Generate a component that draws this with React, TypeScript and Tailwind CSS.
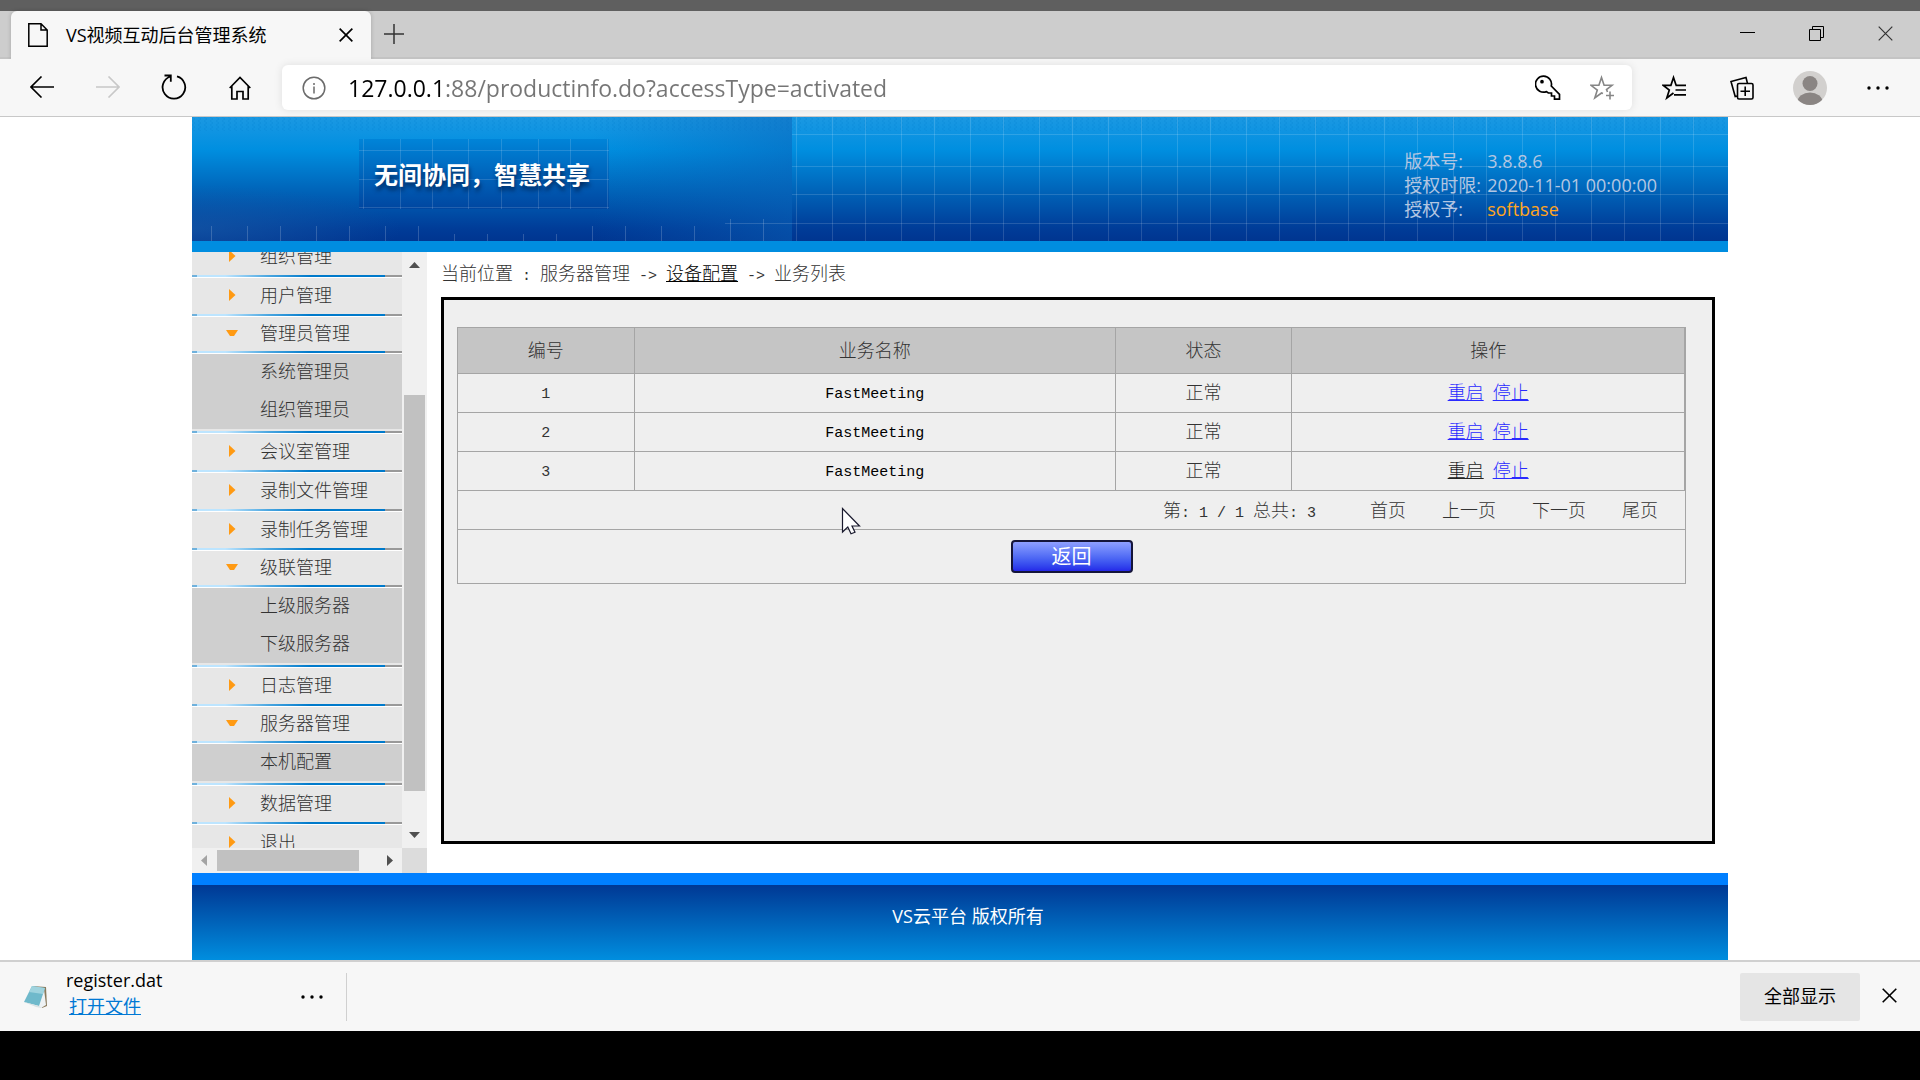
import React from "react";

type Item = { label: string; children?: string[] };

const menu: Item[] = [
  { label: "组织管理" },
  { label: "用户管理" },
  { label: "管理员管理", children: ["系统管理员", "组织管理员"] },
  { label: "会议室管理" },
  { label: "录制文件管理" },
  { label: "录制任务管理" },
  { label: "级联管理", children: ["上级服务器", "下级服务器"] },
  { label: "日志管理" },
  { label: "服务器管理", children: ["本机配置"] },
  { label: "数据管理" },
  { label: "退出" },
];

const rows = [
  { id: 1, name: "FastMeeting", status: "正常", visited: false },
  { id: 2, name: "FastMeeting", status: "正常", visited: false },
  { id: 3, name: "FastMeeting", status: "正常", visited: true },
];

function Mono({ children }: { children: React.ReactNode }) {
  return (
    <span className="whitespace-pre font-['Liberation_Mono',monospace] text-[15px]">{children}</span>
  );
}

function Cross({ size, stroke }: { size: number; stroke: number }) {
  return (
    <svg width={size} height={size} viewBox="0 0 15 15" fill="none" stroke="currentColor" strokeWidth={stroke} aria-hidden="true">
      <path d="M.7 .7 14.3 14.3M14.3 .7 .7 14.3" />
    </svg>
  );
}

function Dots() {
  return (
    <svg width="24" height="6" viewBox="0 0 24 6" fill="currentColor" aria-hidden="true">
      <circle cx="3" cy="3" r="1.7" />
      <circle cx="12" cy="3" r="1.7" />
      <circle cx="21" cy="3" r="1.7" />
    </svg>
  );
}

function TabStrip() {
  return (
    <div className="flex h-12 bg-[#cdcdcd] pl-[11px] shadow-[inset_0_-2px_0_#c4c4c4]">
      <div className="flex w-[360px] items-center rounded-t-md bg-[#f7f7f7] pr-[18px] pl-[17px] shadow-[0_0_4px_#00000030]">
        <svg width="20" height="24" viewBox="0 0 20 24" fill="none" stroke="#000" strokeWidth="1.5" aria-hidden="true">
          <path d="M.8 .8H13L19.2 7V23.2H.8ZM13 .8V7h6.2" />
        </svg>
        <span className="ml-[18px] grow text-lg leading-6 text-black">VS视频互动后台管理系统</span>
        <button aria-label="关闭标签页" className="text-black">
          <Cross size={14} stroke={1.8} />
        </button>
      </div>
      <button aria-label="新建标签页" className="ml-[13px] flex w-5 items-center pb-0.5 text-[#333]">
        <svg width="20" height="20" viewBox="0 0 20 20" fill="none" stroke="currentColor" strokeWidth="1.5" aria-hidden="true">
          <path d="M10 0V20M0 10H20" />
        </svg>
      </button>
      <div className="ml-auto flex pb-1">
        <button aria-label="最小化" className="flex w-[69px] items-center justify-center">
          <svg width="15" height="15" viewBox="0 0 15 15" aria-hidden="true"><path d="M0 6h15v1H0z" /></svg>
        </button>
        <button aria-label="还原" className="flex w-[69px] items-center justify-center">
          <svg width="15" height="15" viewBox="0 0 15 15" fill="none" stroke="#000" aria-hidden="true">
            <path d="M.5 3.5h11v11H.5ZM3.5 3.5V.5h11v11h-3" />
          </svg>
        </button>
        <button aria-label="关闭窗口" className="flex w-[69px] items-center justify-center text-[#333]">
          <Cross size={15} stroke={1.2} />
        </button>
      </div>
    </div>
  );
}

function Toolbar() {
  return (
    <div className="flex h-[58px] items-center border-b border-[#c8c8c8] bg-[#f7f7f7] pr-2 pl-[9px] text-black">
      <button aria-label="后退" className="flex w-[66px] justify-center pb-0.5">
        <svg width="24" height="22" viewBox="0 0 24 22" fill="none" stroke="#000" strokeWidth="1.6" aria-hidden="true"><path d="M11.5 .5 1 11 11.5 21.500M1 11H24" /></svg>
      </button>
      <button aria-label="前进" className="flex w-[66px] justify-center pb-0.5">
        <svg width="24" height="22" viewBox="0 0 24 22" fill="none" stroke="#c8c8c8" strokeWidth="1.6" aria-hidden="true"><path d="M12.5 .5 23 11 12.5 21.500M23 11H0" /></svg>
      </button>
      <button aria-label="刷新" className="flex w-[66px] justify-center pb-0.5">
        <svg width="26" height="26" viewBox="0 0 26 26" fill="none" stroke="#000" strokeWidth="1.8" aria-hidden="true">
          <path d="M9.500 2.500A11.300 11.300 0 1 0 16 2.400M3.500 1.500h6.300v6.300" />
        </svg>
      </button>
      <button aria-label="主页" className="flex w-[66px] justify-center">
        <svg width="22" height="24" viewBox="0 0 22 24" fill="none" stroke="#000" strokeWidth="1.7" aria-hidden="true">
          <path d="M.7 12 11 1.500 21.300 12M2.800 10V23H8V15.500H14V23H19.200V10" />
        </svg>
      </button>
      <div className="mr-2 ml-[9px] flex h-[45px] grow items-center rounded-md bg-white pr-[17px] pl-[20px] shadow-[0_0_8px_#0000001a]">
        <svg width="24" height="24" viewBox="0 0 24 24" fill="none" stroke="#6b6b6b" strokeWidth="1.5" aria-hidden="true">
          <circle cx="12" cy="12" r="10.800" />
          <path d="M12 10.500V17.500M12 7V9" />
        </svg>
        <input
          aria-label="地址栏"
          defaultValue="127.0.0.1:88/productinfo.do?accessType=activated"
          className="ml-[22px] grow bg-[linear-gradient(90deg,#000_94px,#757575_94px)] bg-clip-text font-['Open_Sans',sans-serif] text-[23px] leading-8 text-transparent outline-none"
        />
        <button aria-label="密码">
          <svg width="26" height="26" viewBox="0 0 26 26" fill="none" stroke="#000" strokeWidth="1.7" aria-hidden="true">
            <path d="M11.500 16.600A8 8 0 1 1 16.300 11L24.500 19.300V24.200H19.500V21H16.500V18H13.300Z" />
            <circle cx="7" cy="6.700" r="1" fill="#000" />
          </svg>
        </button>
        <button aria-label="收藏此页" className="ml-[29px]">
          <svg width="25" height="26" viewBox="0 0 25 26" fill="none" stroke="#868686" strokeWidth="1.6" aria-hidden="true">
            <path d="M13 18.500 11.500 18 4.800 23 7.300 15 1 10.300H8.900L11.500 2.500 14.100 10.300H22L16.500 14.500 17.500 17M20 16.500V24.500M16 20.500H24" />
          </svg>
        </button>
      </div>
      <button aria-label="收藏夹" className="flex w-[68px] justify-center">
        <svg width="25" height="26" viewBox="0 0 25 26" fill="none" stroke="#000" strokeWidth="1.7" aria-hidden="true">
          <path d="M11.500 18 4.800 23 7.300 15 1 10.300H8.900L11.500 2.500 14.100 10.300M13.500 10.300H24M13.500 15H24M12 19.800H24" />
        </svg>
      </button>
      <button aria-label="集锦" className="flex w-[68px] justify-center">
        <svg width="24" height="24" viewBox="0 0 24 24" fill="none" stroke="#000" strokeWidth="1.6" aria-hidden="true">
          <rect x="7.500" y="7.500" width="15.500" height="15.500" rx="1.500" />
          <path d="M15.200 10.500V20M10.500 15.200H20M17.500 7.500 16 1.500 1 5.500 5.200 20.500 7.500 20" />
        </svg>
      </button>
      <button aria-label="用户" className="flex w-[68px] justify-center">
        <svg width="34" height="34" viewBox="0 0 34 34" aria-hidden="true">
          <clipPath id="avatar"><circle cx="17" cy="17" r="17" /></clipPath>
          <g clipPath="url(#avatar)">
            <rect width="34" height="34" fill="#d2d0ce" />
            <circle cx="17" cy="12.500" r="7.500" fill="#8a8583" />
            <ellipse cx="17" cy="31" rx="12.500" ry="9.500" fill="#8a8583" />
          </g>
        </svg>
      </button>
      <button aria-label="设置及其他" className="flex w-[68px] justify-center"><Dots /></button>
    </div>
  );
}

const leftTicks = [211, 247, 280, 316, 349, 385, 418, 454, 487, 523, 556, 592, 625, 661, 694, 730, 763];
const tickTop = (i: number) => (i < 7 ? 109 : i < 11 ? 117 : i < 15 ? 109 : 102);

function BannerArt() {
  return (
    <svg className="absolute inset-0 h-full w-full" aria-hidden="true">
      <defs>
        <linearGradient id="sky" x1="0" y1="0" x2="0" y2="1">
          <stop offset="0" stopColor="#1b98e2" />
          <stop offset=".12" stopColor="#0f94e2" />
          <stop offset=".26" stopColor="#008fe0" />
          <stop offset=".6" stopColor="#0063b8" />
          <stop offset=".9" stopColor="#003c98" />
          <stop offset="1" stopColor="#003590" />
        </linearGradient>
        <linearGradient id="logo" x1="0" y1="0" x2="0" y2="1">
          <stop offset="0" stopColor="#0084d8" />
          <stop offset="1" stopColor="#0046a0" />
        </linearGradient>
        <radialGradient id="glow" cx="0" cy=".9" r=".35">
          <stop offset="0" stopColor="#1a5ca8" stopOpacity=".6" />
          <stop offset="1" stopColor="#1a5ca8" stopOpacity="0" />
        </radialGradient>
        <linearGradient id="shade" x1="0" y1="0" x2="1" y2="0">
          <stop offset="0" stopColor="#0a62b8" stopOpacity="0" />
          <stop offset="1" stopColor="#0a62b8" stopOpacity=".5" />
        </linearGradient>
        <pattern id="grid" x="604" y="0" width="69" height="124" patternUnits="userSpaceOnUse">
          <path d="M.5 0V124M36.500 0V124" stroke="#fff" strokeOpacity=".14" />
          <path d="M0 17.500H69M0 49.500H69M0 77.500H69M0 106.500H69" stroke="#fff" strokeOpacity=".14" />
        </pattern>
        <pattern id="weave" width="6" height="4" patternUnits="userSpaceOnUse">
          <path d="M0 0 3 2 0 4" fill="none" stroke="#0080d0" strokeOpacity=".25" />
        </pattern>
      </defs>
      <rect width="100%" height="124" fill="url(#sky)" />
      <rect width="100%" height="14" fill="url(#weave)" />
      <rect width="600" height="124" fill="url(#glow)" />
      <rect x="400" width="200" height="124" fill="url(#shade)" />
      <rect x="600" width="100%" height="124" fill="url(#grid)" />
      {leftTicks.map((x, i) => (
        <path key={x} d={`M${x - 191.5} ${tickTop(i)}V124`} stroke="#fff" strokeOpacity=".18" />
      ))}
      <path d="M533 106.500H600" stroke="#fff" strokeOpacity=".15" />
      <rect x="167" y="22" width="250" height="70" fill="url(#logo)" />
      <path
        d="M171.500 22V92M208.500 22V92M240.500 22V92M276.500 22V92M309.500 22V92M346.500 22V92M378.500 22V92M415.500 22V92M167 33.500H417M167 62.500H417M167 90.500H417"
        stroke="#fff"
        strokeOpacity=".14"
      />
    </svg>
  );
}

function Banner() {
  return (
    <header className="border-b-[11px] border-[#008de0]">
      <div className="relative flex h-[124px] justify-between">
        <BannerArt />
        <h1 className="relative mt-[42px] ml-[182px] text-2xl leading-8 font-bold text-white [text-shadow:1px_4px_4px_#002a60]">
          无间协同，智慧共享
        </h1>
        <dl className="relative mt-8 mr-[71px] grid grid-cols-[83px_auto] content-start text-lg leading-6 text-[#b3c6e2]">
          <dt>版本号:</dt>
          <dd>3.8.8.6</dd>
          <dt>授权时限:</dt>
          <dd>2020-11-01 00:00:00</dd>
          <dt>授权予:</dt>
          <dd className="text-[#ffa51e]">softbase</dd>
        </dl>
      </div>
    </header>
  );
}

function Divider() {
  return (
    <div className="flex h-[3px] border-b border-white">
      <div className="w-[5px] bg-[#6fb1dc]" />
      <div className="grow bg-[linear-gradient(90deg,#bde5ff_15%,#4aa6e0_38%,#007acb_60%)]" />
      <div className="w-[17px] bg-[#999]" />
    </div>
  );
}

function Sidebar() {
  return (
    <div className="grid w-[235px] shrink-0 grid-cols-[210px_25px] grid-rows-[596px_25px]">
      <nav className="overflow-hidden bg-[#e7e7e7]">
        <ul className="-mt-[13px] text-lg leading-6 font-light text-[#333]">
          {menu.map((item, i) => (
            <li key={item.label}>
              {i > 0 && <Divider />}
              <a href="#" className={item.children ? "flex h-[34px] items-center pb-0.5 pl-[34px]" : "flex h-9 items-center pb-0.5 pl-[34px]"}>
                <svg width="12" height="12" viewBox="0 0 12 12" fill="#ff9a13" className="mr-[22px]" aria-hidden="true">
                  {item.children ? <path d="M0 3H12L8 9H4Z" /> : <path d="M3 0 9.500 6 3 12Z" />}
                </svg>
                {item.label}
              </a>
              {item.children && (
                <>
                  <Divider />
                  <ul className="mb-[2px] flex flex-col gap-px bg-[#cfcfcf]">
                    {item.children.map((c) => (
                      <li key={c}>
                        <a href="#" className="flex h-[37px] items-center pb-1 pl-[68px]">{c}</a>
                      </li>
                    ))}
                  </ul>
                </>
              )}
            </li>
          ))}
        </ul>
      </nav>
      <div className="flex flex-col items-center bg-[#f0f0f0]">
        <svg width="11" height="6" viewBox="0 0 11 6" fill="#505050" className="mt-[10px]" aria-hidden="true"><path d="M5.500 0 11 6H0Z" /></svg>
        <div className="mt-[127px] h-[396px] w-[21px] bg-[#c1c1c1]" />
        <svg width="11" height="6" viewBox="0 0 11 6" fill="#505050" className="mt-auto mb-[10px]" aria-hidden="true"><path d="M0 0H11L5.500 6Z" /></svg>
      </div>
      <div className="flex items-center bg-[#f0f0f0]">
        <svg width="6" height="11" viewBox="0 0 6 11" fill="#a3a3a3" className="ml-[9px]" aria-hidden="true"><path d="M6 0V11L0 5.500Z" /></svg>
        <div className="ml-[10px] h-[21px] w-[142px] bg-[#c1c1c1]" />
        <svg width="6" height="11" viewBox="0 0 6 11" fill="#505050" className="mr-[9px] ml-auto" aria-hidden="true"><path d="M0 0V11L6 5.500Z" /></svg>
      </div>
      <div className="bg-[#dcdcdc]" />
    </div>
  );
}

function Cursor() {
  return (
    <svg className="absolute top-[16px] left-[383px] z-10" width="20" height="28" viewBox="0 0 20 28" aria-hidden="true">
      <path d="M1.500 1.500V25L6.800 20 10 26.800 14 25.200 11 19H18.500Z" fill="#fff" stroke="#1a1a2e" strokeWidth="1.200" />
    </svg>
  );
}

function ServiceTable() {
  return (
    <table className="w-full table-fixed border-separate border-spacing-0 border-t border-r border-l border-[#a5a5a5] text-center text-lg leading-6 font-light text-[#333]">
      <colgroup>
        <col className="w-[14.4%]" />
        <col className="w-[39.2%]" />
        <col className="w-[14.4%]" />
        <col />
      </colgroup>
      <thead>
        <tr className="h-[46px] bg-[#c5c5c5]">
          {["编号", "业务名称", "状态", "操作"].map((h) => (
            <th key={h} scope="col" className="border-r border-b border-[#a5a5a5] p-0 pb-0.5 font-light">{h}</th>
          ))}
        </tr>
      </thead>
      <tbody>
        {rows.map((r) => (
          <tr key={r.id} className="h-[39px]">
            <td className="border-r border-b border-[#a5a5a5] p-0"><Mono>{r.id}</Mono></td>
            <td className="border-r border-b border-[#a5a5a5] p-0 text-black"><Mono>{r.name}</Mono></td>
            <td className="border-r border-b border-[#a5a5a5] p-0 pb-0.5">{r.status}</td>
            <td className="border-r border-b border-[#a5a5a5] p-0 pb-0.5">
              <div className="flex justify-center gap-[9px]">
                <a href="#" className={r.visited ? "text-[#222] underline" : "text-[#2a2aff] underline"}>重启</a>
                <a href="#" className="text-[#2a2aff] underline">停止</a>
              </div>
            </td>
          </tr>
        ))}
        <tr className="h-[39px]">
          <td colSpan={4} className="relative border-b border-[#a5a5a5] p-0">
            <div className="flex h-6 justify-end gap-9 pr-[27px]">
              <span className="mr-[18px]">
                第<Mono>: 1 / 1 </Mono>总共<Mono>: 3</Mono>
              </span>
              <a href="#">首页</a>
              <a href="#">上一页</a>
              <a href="#">下一页</a>
              <a href="#">尾页</a>
            </div>
            <Cursor />
          </td>
        </tr>
        <tr className="h-[54px]">
          <td colSpan={4} className="border-b border-[#a5a5a5] p-0">
            <button className="mx-auto block h-[33px] w-[122px] rounded border-2 border-[#15153a] bg-linear-to-b from-[#8f9fff] to-[#2626e8] text-xl leading-7 font-normal text-white">
              返回
            </button>
          </td>
        </tr>
      </tbody>
    </table>
  );
}

export default function App() {
  return (
    <div className="flex min-h-screen flex-col bg-black font-['Open_Sans','Noto_Sans_CJK_SC',sans-serif]">
      <div className="h-[11px] bg-[#5f5f5f]" />
      <TabStrip />
      <Toolbar />
      <div className="grow bg-white">
        <div className="mx-auto w-4/5">
          <Banner />
          <div className="flex">
            <Sidebar />
            <main className="flex grow flex-col pr-[13px] pb-[29px] pl-[14px]">
              <p className="h-[45px] pt-[9px] text-lg leading-6 font-light text-[#333]">
                当前位置<Mono> : </Mono>服务器管理<Mono>{" -> "}</Mono>
                <a href="#" className="text-black underline">设备配置</a>
                <Mono>{" -> "}</Mono>业务列表
              </p>
              <section className="grow border-[3px] border-black bg-[#efefef] pt-[27px] pr-[26px] pl-[13px]">
                <ServiceTable />
              </section>
            </main>
          </div>
          <footer className="h-[87px] border-t-[12px] border-[#007fff] bg-linear-to-b from-[#003894] to-[#008edf] pt-[19px] pl-4 text-center text-lg leading-6 text-white">
            VS云平台 版权所有
          </footer>
        </div>
      </div>
      <div className="mb-[49px] flex h-[71px] items-center border-t-2 border-[#d0d0d0] bg-[#f7f7f7] pr-[23px] pl-6 text-lg leading-6">
        <svg width="24" height="24" viewBox="0 0 24 24" aria-hidden="true">
          <path d="M8 1 22 2 23 21 18 23Z" fill="#8a7a5c" />
          <path d="M20 4 22 20 17 23 14 20Z" fill="#eef2f4" />
          <path d="M8 1 21 3 15 21 0 17Z" fill="#6fb9cb" />
          <path d="M8 1 21 3 19 9 5 7Z" fill="#9fd3de" />
          <path d="M0 17 15 21 18 23 12 22Z" fill="#d8e2e4" />
        </svg>
        <div className="ml-[18px] w-[234px] pb-2 leading-[26px]">
          <div className="text-black">register.dat</div>
          <a href="#" className="ml-[3px] text-[#0078d4] underline">打开文件</a>
        </div>
        <button aria-label="更多下载选项"><Dots /></button>
        <div className="ml-[22px] h-12 w-px bg-[#d0d0d0]" />
        <button className="ml-auto h-12 w-[120px] rounded-xs bg-[#e5e5e5] pb-0.5 text-black">全部显示</button>
        <button aria-label="关闭下载栏" className="ml-[22px] pb-0.5"><Cross size={15} stroke={1.6} /></button>
      </div>
    </div>
  );
}
